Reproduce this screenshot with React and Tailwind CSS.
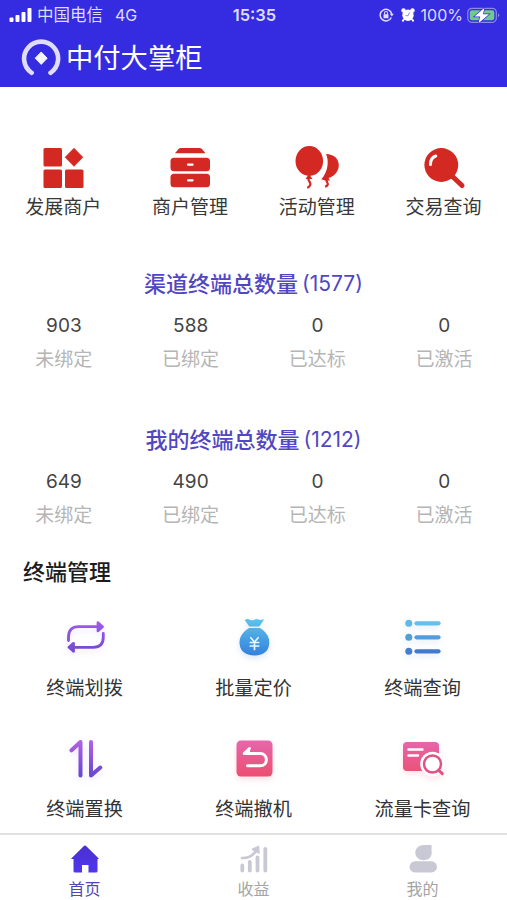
import React, { useState } from 'react'

const quickLinks = [
  { title: '发展商户', icon: BlocksIcon },
  { title: '商户管理', icon: DrawerIcon },
  { title: '活动管理', icon: BalloonIcon },
  { title: '交易查询', icon: SearchIcon },
]

const totals = [
  { title: '渠道终端总数量', total: 1577, counts: [['未绑定', 903], ['已绑定', 588], ['已达标', 0], ['已激活', 0]] },
  { title: '我的终端总数量', total: 1212, counts: [['未绑定', 649], ['已绑定', 490], ['已达标', 0], ['已激活', 0]] },
]

const terminalLinks = [
  { title: '终端划拨', icon: RepeatIcon },
  { title: '批量定价', icon: MoneyBagIcon },
  { title: '终端查询', icon: ListIcon },
  { title: '终端置换', icon: SwapIcon },
  { title: '终端撤机', icon: UndoIcon },
  { title: '流量卡查询', icon: CardSearchIcon },
]

const tabs = [
  { title: '首页', icon: HomeIcon },
  { title: '收益', icon: ChartIcon },
  { title: '我的', icon: UserIcon },
]

function BlocksIcon() {
  return (
    <svg className="h-11 w-11" viewBox="0 0 44 44" fill="#d42822">
      <rect x="2.500" y="2" width="18.500" height="18.500" rx="1.5" />
      <rect x="2.500" y="23.500" width="18.500" height="18.500" rx="1.5" />
      <rect x="24" y="23.500" width="18.500" height="18.500" rx="1.5" />
      <path d="M33 2.300 41.800 11.300 33 20.300 24.200 11.300Z" stroke="#d42822" strokeWidth=".8" strokeLinejoin="round" />
    </svg>
  )
}

function DrawerIcon() {
  return (
    <svg className="h-11 w-11" viewBox="0 0 44 44" fill="#d42822">
      <path d="M12.500 2h19q1.500 0 2.500 1l3.500 4.300H7L10.500 3q1-1 2-1Z" />
      <rect x="2.500" y="11.800" width="39.500" height="13.400" rx="3.500" />
      <rect x="2.500" y="27.800" width="39.500" height="13.400" rx="3.500" />
      <rect x="19" y="17.500" width="6.600" height="2.200" rx=".8" fill="#fff" />
      <rect x="19" y="33.200" width="6.600" height="2.200" rx=".8" fill="#fff" />
    </svg>
  )
}

function BalloonIcon() {
  return (
    <svg className="h-11 w-11" viewBox="0 0 44 44" fill="#d42822">
      <ellipse cx="14.300" cy="15" rx="13.800" ry="15" />
      <path d="m14 28-3.500 5h7ZM31 8C39 8 44 13 43.800 19.500 43.500 26.500 38 31 33.500 32l1.500 2.500h-5l-3.700-1.300C33.500 25.500 34 14 31 8Z" />
      <path d="M13.700 32c-1.500 3 3.300 4.500 1.300 7.500-.7 1.300-1.800 1.800-2.800 2.300M31.800 33c-1.500 3 2.300 4 .8 6-.7 1-1.500 1.400-2.500 1.800" fill="none" stroke="#d42822" strokeWidth="2.200" />
    </svg>
  )
}

function SearchIcon() {
  return (
    <svg className="h-11 w-11" viewBox="0 0 44 44">
      <circle cx="19.300" cy="19" r="16.900" fill="#d42822" />
      <path d="m30.500 30.500 9.500 9" stroke="#d42822" strokeWidth="5" strokeLinecap="round" />
      <path d="M8.500 18.500c0-5 2-7.500 5.300-8.500" fill="none" stroke="#fff" strokeWidth="3" strokeLinecap="round" />
    </svg>
  )
}

function RepeatIcon() {
  return (
    <svg className="h-11 w-11 drop-shadow-[0_3px_3px_rgba(160,91,234,0.15)]" viewBox="0 0 44 44" fill="none" stroke="url(#repeat)" strokeWidth="2.800" strokeLinecap="round" strokeLinejoin="round">
      <defs>
        <linearGradient id="repeat" x1="0" y1="6" x2="0" y2="38" gradientUnits="userSpaceOnUse">
          <stop stopColor="#a05bea" />
          <stop offset="1" stopColor="#7049cf" />
        </linearGradient>
      </defs>
      <path d="M5.500 25.500V22c0-7 3.500-10.300 10-10.300H37" />
      <path d="m35 7.700 4.500 4-4.500 4Z" fill="url(#repeat)" />
      <path d="M40.300 18.500V22c0 7-3.500 10.300-10 10.300H8.500" />
      <path d="m10.500 28.300-4.500 4 4.500 4Z" fill="url(#repeat)" />
    </svg>
  )
}

function MoneyBagIcon() {
  return (
    <svg className="h-11 w-11 drop-shadow-[0_3px_3px_rgba(67,127,205,0.18)]" viewBox="0 0 44 44">
      <defs>
        <linearGradient id="bag" x1="0" y1="3" x2="0" y2="41" gradientUnits="userSpaceOnUse">
          <stop stopColor="#5fc5ec" />
          <stop offset="1" stopColor="#337fdc" />
        </linearGradient>
      </defs>
      <path d="M13.300 4.600q2.500-1.200 4.700.2 2 1 4 .2 2-1.800 4.300-.5 1.800 1 5-.3.800.2.300 1l-4.300 6.300H17.300l-4.300-6Q12.500 5 13.300 4.600Z" fill="url(#bag)" />
      <path d="M17 13h11c6 4 9.300 8.500 9.300 14.500 0 8-5.500 13-14.800 13S7.500 35.500 7.500 27.500C7.500 21.500 11 17 17 13Z" fill="url(#bag)" />
      <path d="m18.800 22.700 3.700 4.300 3.700-4.300M22.500 27v7.500M18.300 27.500h8.400M18.300 31h8.400" fill="none" stroke="#e9f6ff" strokeWidth="1.700" strokeLinecap="round" />
    </svg>
  )
}

function ListIcon() {
  return (
    <svg className="h-11 w-11 drop-shadow-[0_3px_3px_rgba(67,127,205,0.15)]" viewBox="0 0 44 44" strokeWidth="4.200" strokeLinecap="round">
      <circle cx="7.800" cy="8.300" r="3.500" fill="#62b8e5" />
      <path d="M15.500 8.300h22" stroke="#65bfea" />
      <circle cx="7.800" cy="22.300" r="3.500" fill="#519fd9" />
      <path d="M15.500 22.300h22" stroke="#549cdb" />
      <circle cx="7.800" cy="36.300" r="3.500" fill="#437fcd" />
      <path d="M15.500 36.300h22" stroke="#417acd" />
    </svg>
  )
}

function SwapIcon() {
  return (
    <svg className="h-11 w-11 drop-shadow-[0_3px_3px_rgba(160,91,234,0.15)]" viewBox="0 0 44 44" fill="none" stroke="url(#swap)" strokeWidth="4" strokeLinecap="round" strokeLinejoin="round">
      <defs>
        <linearGradient id="swap" x1="0" y1="4" x2="0" y2="40" gradientUnits="userSpaceOnUse">
          <stop stopColor="#b263e2" />
          <stop offset="1" stopColor="#6449cf" />
        </linearGradient>
      </defs>
      <path d="M8.500 14.300 17.500 6v33.500" />
      <path d="M28 6v33.500l9.300-8" />
    </svg>
  )
}

function UndoIcon() {
  return (
    <svg className="h-11 w-11 drop-shadow-[0_3px_3px_rgba(236,79,111,0.18)]" viewBox="0 0 44 44">
      <defs>
        <linearGradient id="pink" x1="0" y1="4" x2="0" y2="40" gradientUnits="userSpaceOnUse">
          <stop stopColor="#e667ae" />
          <stop offset="1" stopColor="#ec4f6f" />
        </linearGradient>
      </defs>
      <rect x="4.500" y="4.500" width="36" height="36" rx="4.500" fill="url(#pink)" />
      <path d="M13.500 17.500H28c8.500 0 8.500 12.300 0 12.300H15.500" fill="none" stroke="#fff" strokeWidth="3" strokeLinecap="round" />
      <path d="m17.500 12.500-5.300 5" stroke="#fff" strokeWidth="3" strokeLinecap="round" />
      <path d="m17.500 12.500-5 5h6Z" fill="#fff" />
    </svg>
  )
}

function CardSearchIcon() {
  return (
    <svg className="h-11 w-11 drop-shadow-[0_3px_3px_rgba(236,79,111,0.15)]" viewBox="0 0 44 44">
      <rect x="2" y="6" width="36" height="29" rx="4" fill="url(#pink)" />
      <path d="M7.500 13.500h14M7.500 19.500h9.500" stroke="#fff" strokeWidth="2.400" strokeLinecap="round" />
      <circle cx="31.500" cy="28" r="12.300" fill="#fff" />
      <circle cx="31.500" cy="28" r="8.500" fill="none" stroke="#df5384" strokeWidth="2.500" />
      <path d="m37.800 34.300 3.500 3.300" stroke="#df5384" strokeWidth="3" strokeLinecap="round" />
    </svg>
  )
}

function HomeIcon() {
  return (
    <svg className="h-7 w-7" viewBox="0 0 28 28">
      <defs>
        <linearGradient id="home" x1="0" y1="0" x2="0" y2="1">
          <stop stopColor="#4a30cf" />
          <stop offset="1" stopColor="#5036ee" />
        </linearGradient>
      </defs>
      <path d="M13.200.8q.8-.8 1.600 0l12.700 12.400q.7.800-.5.800H26.500v12q0 1.500-1.500 1.500h-7.500v-7.500h-6.500v7.500H4q-1.500 0-1.500-1.500V14H1q-1.200 0-.5-.8Z" fill="url(#home)" />
    </svg>
  )
}

function ChartIcon() {
  return (
    <svg className="h-7 w-7" viewBox="0 0 28 28" fill="none" stroke="#c9c8d5" strokeWidth="3.800" strokeLinecap="round">
      <path d="M2.300 20.500v5M9.800 17v8.500M17.500 12.500v13M25.300 4v21.500" />
      <path d="M2 13c7 .5 11.500-2.500 15-8.500" strokeWidth="2.600" />
      <path d="m12.500 4.300 6-2.800.5 6.500Z" fill="#c9c8d5" strokeWidth="1.500" strokeLinejoin="round" />
    </svg>
  )
}

function UserIcon() {
  return (
    <svg className="h-7 w-7" viewBox="0 0 28 28" fill="#c9c8d5">
      <path d="M15 0h6.500q1.500 0 1.200 1.800-.5 2 0 5.200C23 12 19.500 15.200 14.800 15.200S6.300 12 6.300 7.700 10 0 15 0Z" />
      <rect x=".5" y="16.300" width="27.500" height="11.200" rx="5.600" />
    </svg>
  )
}

function StatusBar() {
  return (
    <div className="grid h-[30px] grid-cols-[1fr_auto_1fr] items-center pl-[9px] pr-[7px] text-[16px] text-[#dedcff]">
      <div className="flex items-center">
        <svg className="h-[15px] w-[24px]" viewBox="0 0 24 15" fill="#fff">
          <rect x=".5" y="9.500" width="4" height="4.500" rx="1" />
          <rect x="6.500" y="7" width="4" height="7" rx="1" />
          <rect x="12.500" y="4" width="4" height="10" rx="1" />
          <rect x="18.500" y="0" width="4" height="14" rx="1" />
        </svg>
        <span className="ml-[4px] text-[16.5px]">中国电信</span>
        <span className="ml-[12px]">4G</span>
      </div>
      <span className="mt-px text-[16.5px] font-semibold">15:35</span>
      <div className="flex items-center justify-end">
        <svg className="h-[14px] w-[15px]" viewBox="0 0 15 14" fill="none" stroke="#dedcff" strokeWidth="1.500">
          <path d="M12.300 9.500A5.800 5.800 0 1 1 12.700 6" />
          <path d="M10.800 5.800h4l-2 2.800Z" fill="#dedcff" stroke="none" />
          <rect x="4.500" y="6.300" width="5" height="4" rx=".5" fill="#dedcff" stroke="none" />
          <path d="M5.500 6.500V5a1.500 1.500 0 0 1 3 0v1.500" strokeWidth="1.100" />
        </svg>
        <svg className="ml-[7px] h-[14px] w-[14px]" viewBox="0 0 14 14" fill="#fff">
          <circle cx="7" cy="7.300" r="5.700" />
          <circle cx="2.500" cy="2.500" r="2.200" />
          <circle cx="11.500" cy="2.500" r="2.200" />
          <path d="m3 11-1.500 2.500M11 11l1.500 2.500" stroke="#fff" strokeWidth="1.800" />
          <path d="M8.500 4.500 7 7.800 4.500 7.500" fill="none" stroke="#8d89e8" strokeWidth="1" />
        </svg>
        <span className="ml-[6px] text-[16px]">100%</span>
        <svg className="ml-[4px] h-[17px] w-[33px]" viewBox="0 0 33 17">
          <rect x=".8" y="1.300" width="28.500" height="14" rx="4" fill="none" stroke="#8d89e8" strokeWidth="1.200" />
          <rect x="2.800" y="3.300" width="24.500" height="10" rx="2.300" fill="#71c98c" />
          <path d="M31 6.300q2.500 2 0 4Z" fill="#8d89e8" />
          <path d="M17.500.8 7.500 9.600h5.700L11.500 16.300 22 7.200h-6Z" fill="#fff" stroke="#352be0" strokeWidth="1.400" paintOrder="stroke" />
        </svg>
      </div>
    </div>
  )
}

function Header() {
  return (
    <header className="h-[87px] bg-[#352be0]">
      <StatusBar />
      <div className="flex h-[55px] items-center pl-[21px]">
        <svg className="h-[40px] w-[40px]" viewBox="0 0 40 40">
          <path d="M10.700 34.800A17 17 0 1 1 29.500 34.800" fill="none" stroke="#dfdcff" strokeWidth="4.600" strokeLinecap="round" />
          <path d="m20.200 14 6 6.200-6 6.200-6-6.200Z" fill="#f3f2ff" stroke="#f3f2ff" strokeLinejoin="round" />
        </svg>
        <h1 className="mt-[4px] ml-[5px] text-[27.3px] text-white">中付大掌柜</h1>
      </div>
    </header>
  )
}

function TotalPanel({ title, total, counts }) {
  return (
    <section className="h-[156px]">
      <h2 className="flex h-[28px] items-center justify-center text-[22px] font-medium text-[#5147c2]">
        {title}
        <span className="ml-[4px] text-[21px] font-normal">({total})</span>
      </h2>
      <div className="mt-[15px] grid grid-cols-4 text-center">
        {counts.map(([name, count]) => (
          <div key={name} className="pl-px">
            <div className="h-[26px] text-[19px] leading-[26px] text-[#444]">{count}</div>
            <div className="mt-[7px] h-[28px] text-[19px] leading-[28px] text-[#b5b5b5]">{name}</div>
          </div>
        ))}
      </div>
    </section>
  )
}

const App = () => {
  const [active, setActive] = useState(0)

  return (
    <div className="flex h-[900px] w-[507px] flex-col overflow-hidden bg-white font-['Inter','Noto_Sans_CJK_SC',sans-serif]">
      <Header />

      <main className="flex-1">
        <nav className="mt-[59px] grid grid-cols-4">
          {quickLinks.map(({ title, icon: Icon }) => (
            <a key={title} className="flex flex-col items-center">
              <Icon />
              <span className="mt-[4px] text-[19px] leading-[28px] text-[#383838]">{title}</span>
            </a>
          ))}
        </nav>

        <div className="mt-[48px]">
          {totals.map((item) => <TotalPanel key={item.title} {...item} />)}
        </div>

        <h2 className="-mt-[24px] pl-[23px] text-[22px] leading-[28px] font-medium text-[#1c1c1c]">终端管理</h2>
        <div className="mt-[29px] grid grid-cols-3 gap-y-[34px]">
          {terminalLinks.map(({ title, icon: Icon }) => (
            <a key={title} className="flex flex-col items-center">
              <Icon />
              <span className="mt-[15px] text-[19.2px] leading-[28px] text-[#333]">{title}</span>
            </a>
          ))}
        </div>
      </main>

      <nav className="grid h-[67px] grid-cols-3 border-t-2 border-[#e1e1e1] bg-white">
        {tabs.map(({ title, icon: Icon }, i) => (
          <button key={title} onClick={() => setActive(i)} className="flex flex-col items-center pt-[10px]">
            <Icon />
            <span className={active === i ? 'mt-[4px] text-[16px] leading-[24px] text-[#5145b8]' : 'mt-[4px] text-[16px] leading-[24px] text-[#a3a3a3]'}>{title}</span>
          </button>
        ))}
      </nav>
    </div>
  )
}

export default App
